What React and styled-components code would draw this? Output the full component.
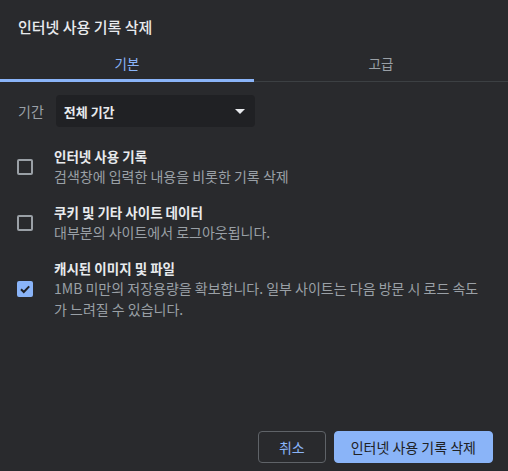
import React from "react";
import styled, { createGlobalStyle } from "styled-components";

const colors = {
  bg: "#292a2d",
  field: "#202124",
  text: "#e8eaed",
  muted: "#9aa0a6",
  blue: "#8ab4f8",
  line: "#3c4043",
  border: "#5f6368",
};

const GlobalStyle = createGlobalStyle`
  html, body {
    margin: 0;
    padding: 0;
    background: ${colors.bg};
  }
  body {
    font-family: "Noto Sans CJK KR", "Noto Sans", sans-serif;
    color: ${colors.text};
  }
`;

const Dialog = styled.div`
  width: 508px;
  height: 471px;
  display: flex;
  flex-direction: column;
  background: ${colors.bg};
  overflow: hidden;
`;

const Title = styled.h1`
  margin: 0;
  padding: 17px 18px 0;
  font-size: 15px;
  line-height: 20px;
  font-weight: 500;
  color: ${colors.text};
`;

const Tabs = styled.div`
  display: flex;
  margin-top: 6px;
  border-bottom: 1px solid ${colors.line};
`;

const Tab = styled.div`
  flex: 1;
  height: 39px;
  display: flex;
  align-items: center;
  justify-content: center;
  font-size: 13.5px;
  color: ${(p) => (p.$active ? colors.blue : colors.muted)};
  box-shadow: ${(p) => (p.$active ? `inset 0 -3px 0 ${colors.blue}` : "none")};
  margin-bottom: -1px;
`;

const Body = styled.div`
  flex: 1;
  padding: 13px 18px 0 17px;
`;

const RangeRow = styled.div`
  display: flex;
  align-items: center;
  gap: 12px;
`;

const RangeLabel = styled.span`
  font-size: 14px;
  color: ${colors.muted};
  padding-left: 1px;
`;

const Select = styled.div`
  width: 199px;
  height: 32px;
  box-sizing: border-box;
  padding: 0 8px;
  display: flex;
  align-items: center;
  justify-content: space-between;
  background: ${colors.field};
  border-radius: 4px;
  font-size: 13px;
  font-weight: 700;
  color: ${colors.text};
`;

const Arrow = styled.span`
  width: 0;
  height: 0;
  border-left: 5px solid transparent;
  border-right: 5px solid transparent;
  border-top: 5px solid ${colors.text};
  margin-right: 2px;
`;

const Options = styled.div`
  display: flex;
  flex-direction: column;
  gap: 15px;
  margin-top: 19px;
`;

const Option = styled.label`
  display: flex;
  align-items: center;
  gap: 21px;
`;

const Box = styled.span`
  flex: none;
  width: 16px;
  height: 16px;
  box-sizing: border-box;
  border-radius: 2px;
  border: 2px solid ${(p) => (p.$checked ? colors.blue : colors.muted)};
  background: ${(p) => (p.$checked ? colors.blue : "transparent")};
  display: flex;
  align-items: center;
  justify-content: center;
`;

const OptionText = styled.div`
  display: flex;
  flex-direction: column;
`;

const OptionTitle = styled.span`
  font-size: 13.5px;
  line-height: 20px;
  font-weight: 700;
  color: ${colors.text};
`;

const OptionDesc = styled.span`
  font-size: 14px;
  line-height: 21px;
  color: ${colors.muted};
  padding-right: 8px;
`;

const Footer = styled.div`
  display: flex;
  justify-content: flex-end;
  gap: 8px;
  padding: 0 15px 8px;
`;

const Button = styled.button`
  height: 32px;
  box-sizing: border-box;
  padding: 0 ${(p) => (p.$primary ? "16px" : "20px")};
  border-radius: 4px;
  font-family: inherit;
  font-size: 14px;
  border: 1px solid ${(p) => (p.$primary ? colors.blue : colors.border)};
  background: ${(p) => (p.$primary ? colors.blue : "transparent")};
  color: ${(p) => (p.$primary ? colors.field : colors.blue)};
`;

const Check = () => (
  <svg width="12" height="12" viewBox="0 0 12 12">
    <path d="M2 6.2 L4.8 9 L10.2 3.4" fill="none" stroke={colors.field} strokeWidth="2" />
  </svg>
);

const options = [
  { title: "인터넷 사용 기록", desc: "검색창에 입력한 내용을 비롯한 기록 삭제", checked: false },
  { title: "쿠키 및 기타 사이트 데이터", desc: "대부분의 사이트에서 로그아웃됩니다.", checked: false },
  {
    title: "캐시된 이미지 및 파일",
    desc: "1MB 미만의 저장용량을 확보합니다. 일부 사이트는 다음 방문 시 로드 속도가 느려질 수 있습니다.",
    checked: true,
  },
];

const App = () => {
  return (
    <Dialog>
      <GlobalStyle />
      <Title>인터넷 사용 기록 삭제</Title>
      <Tabs>
        <Tab $active>기본</Tab>
        <Tab>고급</Tab>
      </Tabs>
      <Body>
        <RangeRow>
          <RangeLabel>기간</RangeLabel>
          <Select>
            전체 기간
            <Arrow />
          </Select>
        </RangeRow>
        <Options>
          {options.map((o) => (
            <Option key={o.title}>
              <Box $checked={o.checked}>{o.checked && <Check />}</Box>
              <OptionText>
                <OptionTitle>{o.title}</OptionTitle>
                <OptionDesc>{o.desc}</OptionDesc>
              </OptionText>
            </Option>
          ))}
        </Options>
      </Body>
      <Footer>
        <Button>취소</Button>
        <Button $primary>인터넷 사용 기록 삭제</Button>
      </Footer>
    </Dialog>
  );
};

export default App;
